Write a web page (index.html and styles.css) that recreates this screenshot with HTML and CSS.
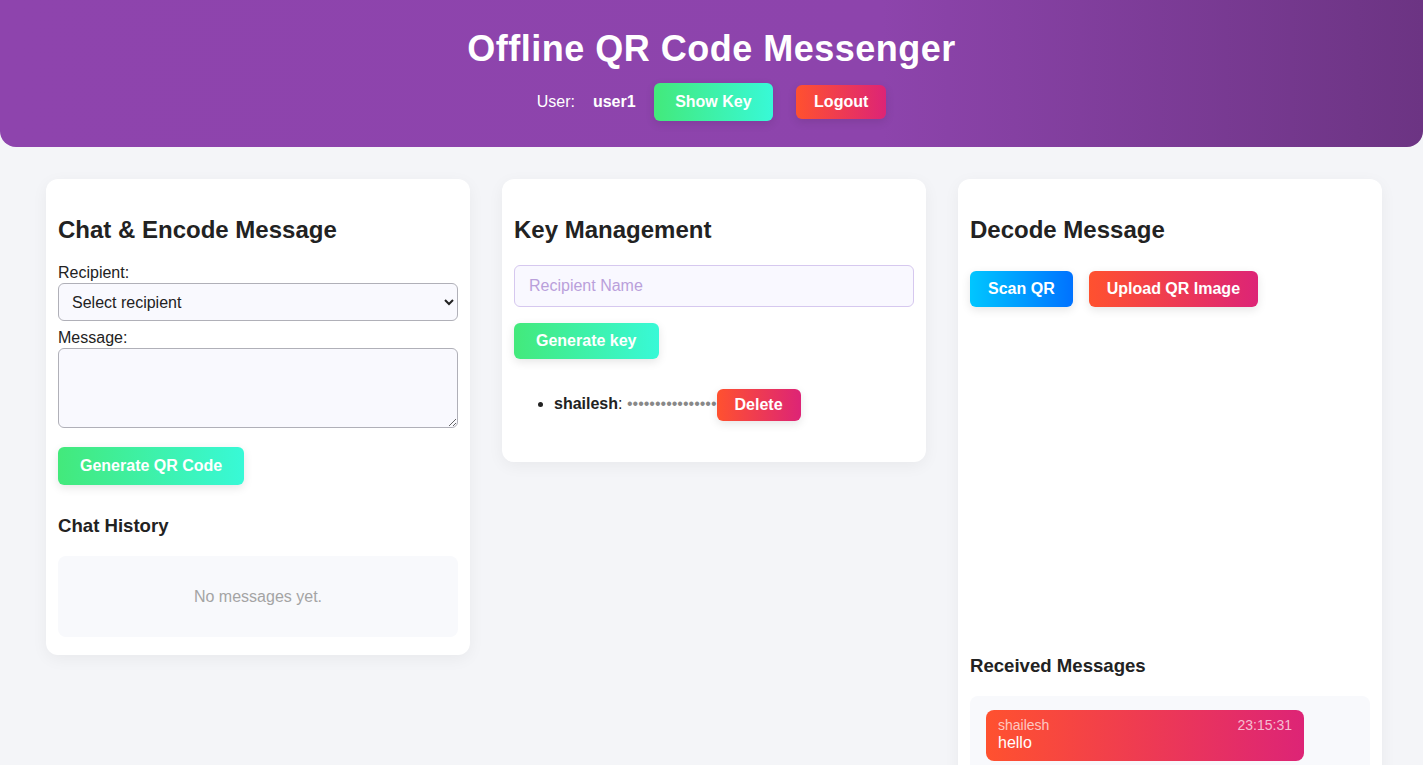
FILE: index.html
```html
<!DOCTYPE html>
<html lang="en">
<head>
<meta charset="utf-8">
<title>Offline QR Code Messenger</title>
<link rel="stylesheet" href="styles.css">
</head>
<body>
<header class="top">
  <h1 class="title">Offline QR Code Messenger</h1>
  <div class="user-row">
    <span class="user-label">User:</span>
    <strong class="user-name">user1</strong>
    <button class="btn btn-green btn-show">Show Key</button>
    <button class="btn btn-red btn-logout">Logout</button>
  </div>
</header>

<main class="grid">
  <section class="card">
    <h2 class="card-title">Chat &amp; Encode Message</h2>
    <label class="field-label" for="rcpt">Recipient:</label>
    <select id="rcpt" class="select">
      <option>Select recipient</option>
    </select>
    <label class="field-label" for="msg">Message:</label>
    <textarea id="msg" class="textarea"></textarea>
    <button class="btn btn-green btn-gen">Generate QR Code</button>
    <h3 class="sub-title">Chat History</h3>
    <div class="history empty">No messages yet.</div>
  </section>

  <section class="card">
    <h2 class="card-title">Key Management</h2>
    <input class="text-input" type="text" placeholder="Recipient Name">
    <button class="btn btn-green btn-genkey">Generate key</button>
    <ul class="key-list">
      <li><strong>shailesh</strong>: <span class="dots">••••••••••••••••</span><button class="btn btn-red btn-delete">Delete</button></li>
    </ul>
  </section>

  <section class="card">
    <h2 class="card-title">Decode Message</h2>
    <div class="btn-row">
      <button class="btn btn-blue">Scan QR</button>
      <button class="btn btn-red">Upload QR Image</button>
    </div>
    <div class="reader"></div>
    <h3 class="sub-title">Received Messages</h3>
    <div class="history received">
      <div class="bubble">
        <div class="bubble-meta"><span>shailesh</span><span>23:15:31</span></div>
        <div class="bubble-text">hello</div>
      </div>
    </div>
  </section>
</main>
</body>
</html>
```

FILE: styles.css
```css
* { box-sizing: border-box; }

body {
  margin: 0;
  background: #f4f5f8;
  font-family: "Liberation Sans", Arial, sans-serif;
  color: #222;
  font-size: 16px;
}

.top {
  background: linear-gradient(90deg, #8e44ad 0%, #8d44ac 62%, #6c3483 100%);
  color: #fff;
  text-align: center;
  padding: 28px 0 26px;
  border-radius: 0 0 16px 16px;
}

.title {
  margin: 0;
  font-size: 36px;
  line-height: 41px;
  letter-spacing: 0.5px;
  font-weight: bold;
}

.user-row {
  margin-top: 14px;
  display: flex;
  justify-content: center;
  align-items: center;
  gap: 18px;
}

.user-label { font-size: 16px; }
.user-name { font-size: 16px; }

.btn {
  border: none;
  color: #fff;
  font-family: inherit;
  font-weight: bold;
  font-size: 16px;
  line-height: 18px;
  border-radius: 6px;
  padding: 10px 22px;
  cursor: pointer;
  box-shadow: 0 3px 10px rgba(0, 0, 0, 0.1);
}

.btn-green { background: linear-gradient(90deg, #43e97b, #38f9d7); }
.btn-red { background: linear-gradient(90deg, #ff512f, #dd2476); }
.btn-blue { background: linear-gradient(90deg, #00c6ff, #0072ff); }

.btn-show { padding: 10px 21.5px; }
.btn-logout { padding: 8px 18px; margin-left: 5px; }

.grid {
  display: grid;
  grid-template-columns: repeat(3, 1fr);
  gap: 32px;
  padding: 32px 41px 0 46px;
  align-items: start;
}

.card {
  background: #fff;
  border-radius: 12px;
  padding: 12px;
  box-shadow: 0 4px 16px rgba(0, 0, 0, 0.05);
  display: flex;
  flex-direction: column;
  align-items: flex-start;
}

.card-title {
  margin: 25px 0 20px;
  font-size: 24px;
  line-height: 28px;
  font-weight: bold;
  color: #222;
}

.field-label {
  display: block;
  line-height: 18px;
  margin-bottom: 1px;
}

.select {
  width: 100%;
  height: 38px;
  border: 1px solid #b0b0b8;
  border-radius: 6px;
  background: #f9f9fe;
  font-family: inherit;
  font-size: 16px;
  color: #222;
  padding: 0 9px;
  margin-bottom: 8px;
}

.textarea {
  width: 100%;
  height: 80px;
  border: 1px solid #b0b0b8;
  border-radius: 6px;
  background: #f9f9fe;
  font-family: inherit;
  font-size: 16px;
  margin: 0 0 19px;
  resize: vertical;
  display: block;
}

.btn-gen { padding: 10px 22px; }

.sub-title {
  margin: 30px 0 20px;
  font-size: 18.6px;
  line-height: 21px;
  font-weight: bold;
  color: #222;
}

.history {
  width: 100%;
  background: #f8f9fc;
  border-radius: 8px;
}

.empty {
  padding: 30px 0;
  text-align: center;
  color: #a4a4a4;
  line-height: 21px;
  margin-bottom: 6px;
}

.text-input {
  width: 100%;
  height: 42px;
  border: 1px solid #d6c8ef;
  border-radius: 6px;
  background: #f9f8ff;
  font-family: inherit;
  font-size: 16px;
  padding: 0 14px;
  margin: 1px 0 16px;
}
.text-input::placeholder { color: #b9a0db; }

.btn-genkey { padding: 9px 22px; }

.key-list {
  margin: 28px 0 29px;
  padding-left: 40px;
  font-size: 16px;
}
.key-list li { line-height: 33px; }

.dots {
  color: #888;
  font-size: 16px;
  letter-spacing: 0;
}

.btn-delete {
  padding: 7px 18px;
  vertical-align: middle;
}

.btn-row {
  display: flex;
  gap: 16px;
  margin-top: 7px;
}
.btn-row .btn { padding: 9px 18px; }

.reader {
  width: 100%;
  height: 318px;
}

.received {
  padding: 14px 16px;
  min-height: 90px;
}

.bubble {
  width: 318px;
  background: linear-gradient(90deg, #ff512f, #dd2476);
  border-radius: 8px;
  padding: 7px 12px 9px;
  color: #fff;
}

.bubble-meta {
  display: flex;
  justify-content: space-between;
  font-size: 14px;
  line-height: 16px;
  color: rgba(255, 255, 255, 0.7);
}

.bubble-text {
  font-size: 16px;
  line-height: 19px;
}
```
